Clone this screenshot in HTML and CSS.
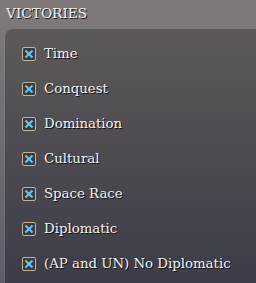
FILE: index.html
```html
<!DOCTYPE html>
<html lang="en">
<head>
    <meta charset="UTF-8">
    <title>Victories</title>
    <link rel="stylesheet" href="styles.css">
</head>
<body>
    <div class="screen">
        <h2 class="heading">VICTORIES</h2>
        <div class="panel">
            <div class="option"><span class="check"></span><span class="label">Time</span></div>
            <div class="option"><span class="check"></span><span class="label">Conquest</span></div>
            <div class="option"><span class="check"></span><span class="label">Domination</span></div>
            <div class="option"><span class="check"></span><span class="label">Cultural</span></div>
            <div class="option"><span class="check"></span><span class="label">Space Race</span></div>
            <div class="option"><span class="check"></span><span class="label">Diplomatic</span></div>
            <div class="option"><span class="check"></span><span class="label">(AP and UN) No Diplomatic</span></div>
        </div>
    </div>
</body>
</html>
```
FILE: styles.css
```css
html, body {
    margin: 0;
    padding: 0;
    height: 100%;
}
body {
    font-family: "DejaVu Serif", serif;
    color: #f4f2ee;
    background: linear-gradient(#807a7b, #5f5d6b);
    overflow: hidden;
}
.screen {
    height: 100%;
    display: flex;
    flex-direction: column;
}
.heading {
    margin: 0;
    padding: 5px 0 0 6px;
    height: 24px;
    font-size: 13.7px;
    font-weight: normal;
    text-shadow: 1px 1px 0 #1c1a1a;
}
.panel {
    flex: 1;
    margin-left: 5px;
    border-radius: 8px 0 0 0;
    background: linear-gradient(#5d595a, #4d4b51 50%, #3c3d48);
    padding-top: 7px;
    box-shadow: -1px 0 0 rgba(255, 255, 255, 0.06);
}
.option {
    display: flex;
    align-items: center;
    height: 35px;
    padding-left: 17px;
}
.check {
    position: relative;
    width: 12px;
    height: 12px;
    border: 1px solid #c9b38d;
    border-radius: 2px;
    background: #3b3a40;
    margin-right: 8px;
    flex: none;
}
.check::before,
.check::after {
    content: "";
    position: absolute;
    left: 5px;
    top: 1px;
    width: 2px;
    height: 10px;
    background: #5ccaf2;
    transform: rotate(45deg);
}
.check::after {
    transform: rotate(-45deg);
}
.label {
    font-size: 13.3px;
    text-shadow: 1px 1px 0 #141313;
}
```
